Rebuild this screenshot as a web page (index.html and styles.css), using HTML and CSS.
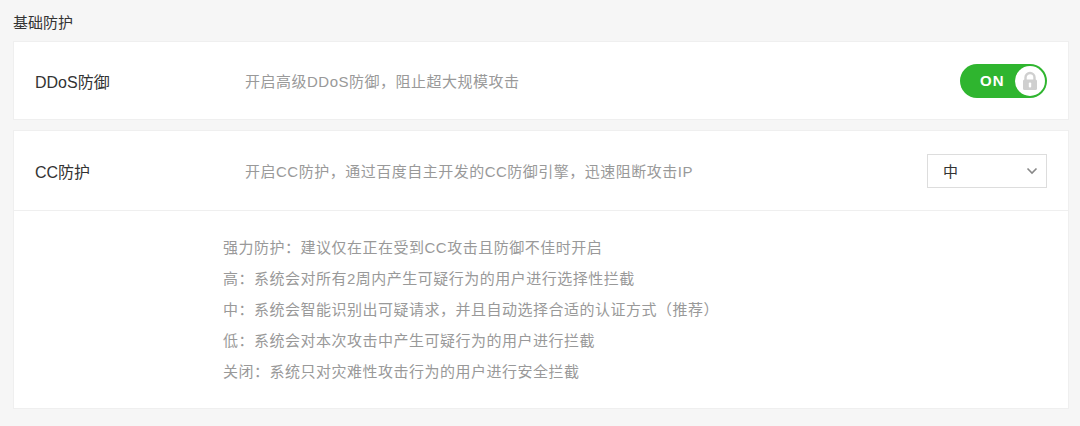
FILE: index.html
```html
<!DOCTYPE html>
<html lang="zh-CN">
<head>
  <meta charset="UTF-8" />
  <title>基础防护</title>
  <link rel="stylesheet" href="styles.css">
</head>
<body>
  <h2 class="section-title">基础防护</h2>

  <div class="card">
    <div class="row">
      <div class="row-label">DDoS防御</div>
      <div class="row-desc">开启高级DDoS防御，阻止超大规模攻击</div>
      <div class="switch">
        <span class="switch-text">ON</span>
        <span class="switch-knob">
          <svg width="18" height="20" viewBox="0 0 18 20">
            <path d="M4.5 9V6.5a4.5 4.5 0 0 1 9 0V9" fill="none" stroke="#cfcfcf" stroke-width="2.4"/>
            <rect x="2" y="8.5" width="14" height="10.5" rx="1.5" fill="#cfcfcf"/>
            <rect x="7.8" y="11.5" width="2.4" height="5" rx="1" fill="#fff"/>
          </svg>
        </span>
      </div>
    </div>
  </div>

  <div class="card">
    <div class="row row-bordered">
      <div class="row-label">CC防护</div>
      <div class="row-desc">开启CC防护，通过百度自主开发的CC防御引擎，迅速阻断攻击IP</div>
      <div class="select">
        <span>中</span>
        <svg width="12" height="8" viewBox="0 0 12 8">
          <path d="M1.5 1.5l4.5 4.5 4.5-4.5" fill="none" stroke="#888" stroke-width="1.6"/>
        </svg>
      </div>
    </div>
    <ul class="levels">
      <li>强力防护：建议仅在正在受到CC攻击且防御不佳时开启</li>
      <li>高：系统会对所有2周内产生可疑行为的用户进行选择性拦截</li>
      <li>中：系统会智能识别出可疑请求，并且自动选择合适的认证方式（推荐）</li>
      <li>低：系统会对本次攻击中产生可疑行为的用户进行拦截</li>
      <li>关闭：系统只对灾难性攻击行为的用户进行安全拦截</li>
    </ul>
  </div>
</body>
</html>
```

FILE: styles.css
```css
body {
  margin: 0;
  padding: 13px 11px 0 13px;
  background: #f6f6f6;
  font-family: "Liberation Sans", "Noto Sans CJK SC", sans-serif;
  color: #333;
}

.section-title {
  margin: 0 0 8px;
  font-size: 15px;
  font-weight: normal;
  line-height: 20px;
  color: #333;
}

.card {
  background: #fff;
  border: 1px solid #efefef;
  margin-bottom: 10px;
}

.row {
  display: flex;
  align-items: center;
  height: 77px;
  padding: 0 21px;
}

.row-bordered {
  height: 79px;
  border-bottom: 1px solid #efefef;
}

.row-label {
  width: 210px;
  font-size: 16px;
  color: #333;
}

.row-desc {
  flex: 1;
  font-size: 15px;
  letter-spacing: 0.5px;
  color: #999;
}

.switch {
  display: flex;
  align-items: center;
  justify-content: space-between;
  width: 87px;
  height: 34px;
  box-sizing: border-box;
  padding: 0 2px 0 20px;
  border-radius: 17px;
  background: #2fb52f;
}

.switch-text {
  color: #fff;
  font-size: 15px;
  font-weight: bold;
  letter-spacing: 1px;
}

.switch-knob {
  display: flex;
  align-items: center;
  justify-content: center;
  width: 30px;
  height: 30px;
  border-radius: 50%;
  background: #fff;
}

.select {
  display: flex;
  align-items: center;
  justify-content: space-between;
  width: 120px;
  height: 34px;
  box-sizing: border-box;
  padding: 0 8px 0 15px;
  border: 1px solid #ddd;
  font-size: 15px;
  color: #333;
}

.levels {
  list-style: none;
  margin: 0;
  padding: 21px 0 21px 209px;
  font-size: 15px;
  letter-spacing: 0.5px;
  line-height: 31px;
  color: #999;
}
```
